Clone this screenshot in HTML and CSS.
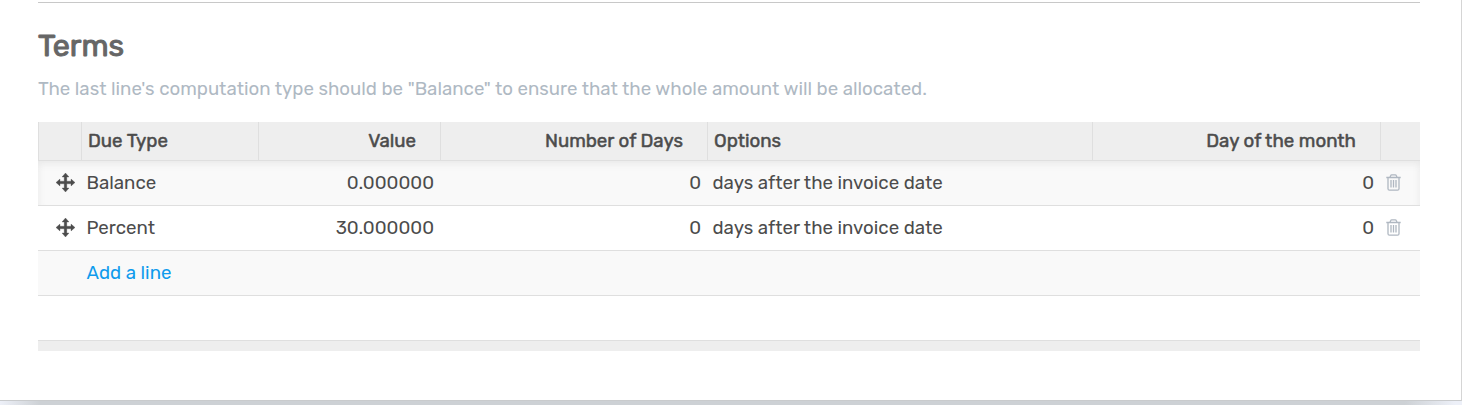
FILE: index.html
```html
<!DOCTYPE html>
<html lang="en">
<head>
<meta charset="utf-8">
<title>Payment Terms</title>
<link rel="stylesheet" href="styles.css">
</head>
<body>
<svg class="defs" width="0" height="0">
  <symbol id="move" viewBox="0 0 19 19"><path d="M9.5 0 13 4H10.8V8.2H15V6L19 9.5 15 13V10.8H10.8V15H13L9.5 19 6 15H8.2V10.8H4V13L0 9.5 4 6V8.2H8.2V4H6Z" fill="currentColor" stroke="currentColor" stroke-width=".3"/></symbol>
  <symbol id="trash" viewBox="0 0 15 17"><path d="M.3 3.5H14.7M4 3.3 4.7 1.6Q5 .8 5.8.8H9.2Q10 .8 10.3 1.6L11 3.3M2 3.5V14.7Q2 16.2 3.5 16.2H11.5Q13 16.2 13 14.7V3.5M5 6V13.5M7.5 6V13.5M10 6V13.5" fill="none" stroke="currentColor" stroke-width="1.3"/></symbol>
</svg>
<main class="sheet">
  <hr class="divider">
  <h2 class="title">Terms</h2>
  <p class="hint">The last line's computation type should be "Balance" to ensure that the whole amount will be allocated.</p>
  <div class="table">
    <div class="row head">
      <span class="cell"></span><span class="cell">Due Type</span><span class="cell num">Value</span><span class="cell num">Number of Days</span><span class="cell">Options</span><span class="cell num">Day of the month</span><span class="cell"></span>
    </div>
    <div class="body">
      <div class="row line odd">
        <span class="cell handle"><svg class="move"><use href="#move"/></svg></span><span class="cell">Balance</span><span class="cell num">0.000000</span><span class="cell num">0</span><span class="cell">days after the invoice date</span><span class="cell num">0</span><span class="cell remove"><svg class="trash"><use href="#trash"/></svg></span>
      </div>
      <div class="row line">
        <span class="cell handle"><svg class="move"><use href="#move"/></svg></span><span class="cell">Percent</span><span class="cell num">30.000000</span><span class="cell num">0</span><span class="cell">days after the invoice date</span><span class="cell num">0</span><span class="cell remove"><svg class="trash"><use href="#trash"/></svg></span>
      </div>
      <div class="row line odd"><span class="cell"></span><a class="cell add">Add a line</a></div>
      <div class="row line"></div>
    </div>
    <div class="foot"></div>
  </div>
</main>
<div class="shadow"></div>
</body>
</html>
```
FILE: styles.css
```css
* { box-sizing: border-box; }
body {
  margin: 0;
  height: 405px;
  overflow: hidden;
  background: #f0f3f8;
  color: #4c4c4c;
  font: 400 18.68px/24px Rubik, Roboto, sans-serif;
}
.defs { position: absolute; }
.sheet {
  height: 401px;
  padding: 2px 41px 0 38px;
  background: #fff;
  border-right: 1px solid #d5d5d5;
  border-bottom: 1px solid #c9cbcd;
}
.divider { height: 1px; margin: 0; border: 0; background: #c8c8c8; }
.title {
  margin: 24px 0 0;
  color: #666;
  font-size: 30.5px;
  line-height: 37px;
  font-weight: 400;
  -webkit-text-stroke: 1px;
}
.hint { margin: 13px 0 0; color: #afb9c3; white-space: nowrap; }
.table { margin-top: 21px; }
.row { display: grid; grid-template-columns: 43px 177px 182px 267px 385px 288px 40px; }
.cell { padding: 0 6px; white-space: nowrap; }
.num { text-align: right; }
.head { height: 39px; background: #eee; border-bottom: 1px solid #dfdfdf; -webkit-text-stroke: .5px; }
.head .cell { padding-top: 7px; border-left: 1px solid #dfdfdf; }
.head .num { padding-right: 24px; }
.line { height: 45px; padding-top: 10px; border-bottom: 1px solid #dfdfdf; }
.line .cell { padding-left: 5.5px; }
.line.odd { background: #f9f9f9; }
.line:first-child { box-shadow: inset 0 7px 8px -5px #e6e6e6, inset 7px 0 7px -6px #eee, inset -7px 0 7px -6px #eee; }
.line .handle { padding: 2px 0 0 18px; }
.line .remove { padding: 3px 0 0 5.5px; }
.move { display: block; width: 19px; height: 19px; }
.trash { display: block; width: 15px; height: 17px; color: #afb7c1; }
.add { color: #0e9bed; }
.foot { height: 10px; background: #eee; }
.shadow { height: 4px; background: linear-gradient(90deg, #edf0f8, #cdd1d5 40px, #cdd1d5 1405px, #edf0f8 1455px); }
```
